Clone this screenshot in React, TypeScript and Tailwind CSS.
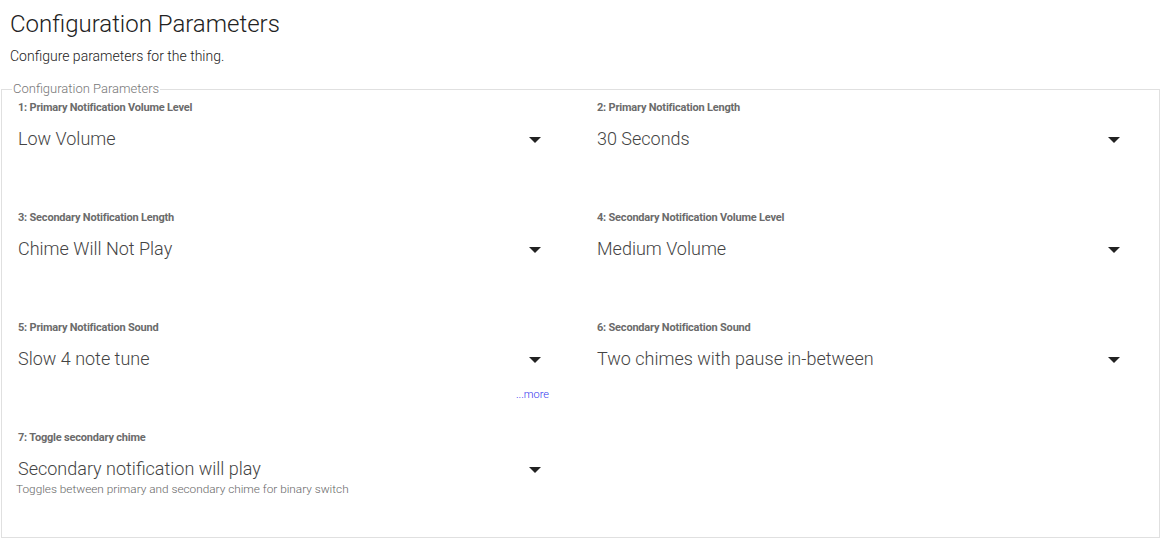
import React from "react";

type Param = {
  label: string;
  value: string;
  more?: boolean;
  help?: string;
};

const params: Param[] = [
  { label: "1: Primary Notification Volume Level", value: "Low Volume" },
  { label: "2: Primary Notification Length", value: "30 Seconds" },
  { label: "3: Secondary Notification Length", value: "Chime Will Not Play" },
  { label: "4: Secondary Notification Volume Level", value: "Medium Volume" },
  { label: "5: Primary Notification Sound", value: "Slow 4 note tune", more: true },
  { label: "6: Secondary Notification Sound", value: "Two chimes with pause in-between" },
  {
    label: "7: Toggle secondary chime",
    value: "Secondary notification will play",
    help: "Toggles between primary and secondary chime for binary switch",
  },
];

function Arrow() {
  return (
    <svg width="12" height="6" viewBox="0 0 12 6" className="absolute right-[8px] top-[10px]">
      <path d="M0 0 L12 0 L6 6 Z" fill="#222" />
    </svg>
  );
}

function Field({ p }: { p: Param }) {
  return (
    <div className="flex flex-col">
      <div className="mt-[1px] text-[11px] leading-[14px] font-bold tracking-[-0.2px] text-[#6b6b6b] whitespace-nowrap">
        {p.label}
      </div>
      <div className="relative mt-[12px] h-[24px] w-[531px]">
        <div className="text-[18px] leading-[24px] font-light text-[#444]">{p.value}</div>
        <Arrow />
      </div>
      {p.help && (
        <div className="mt-[1px] -ml-[2px] text-[11.8px] leading-[14px] font-light text-[#666]">{p.help}</div>
      )}
      {p.more && (
        <div className="mt-[17px] text-right text-[11px] leading-[14px] font-light text-[#3333ee]">...more</div>
      )}
    </div>
  );
}

export default function App() {
  return (
    <div className="w-[1176px] h-[542px] bg-white font-['Roboto',sans-serif] overflow-hidden">
      <div className="ml-[10px] mt-[12px] text-[24px] leading-[24px] font-light text-[#222]">Configuration Parameters</div>
      <div className="ml-[10px] mt-[12px] text-[14px] leading-[16px] font-light text-[#222]">
        Configure parameters for the thing.
      </div>
      <fieldset className="ml-px mt-[17px] w-[1159px] border border-[#e0e0e0] pl-[16px] pt-[3px] pb-0">
        <legend className="-ml-[6px] px-px text-[13px] leading-[16px] font-light text-[#777]">Configuration Parameters</legend>
        <div className="grid grid-cols-[531px_531px] gap-x-[48px] grid-rows-[110px_110px_110px_107px]">
          {params.map((p) => (
            <Field key={p.label} p={p} />
          ))}
        </div>
      </fieldset>
    </div>
  );
}
